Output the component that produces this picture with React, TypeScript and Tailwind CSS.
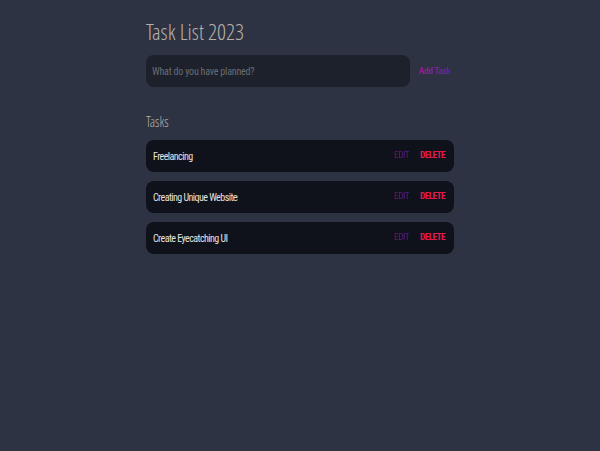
const tasks = ["Freelancing", "Creating Unique Websites", "Create Eyecatching UI"];

const condensed = { fontFamily: '"Roboto Condensed", "Open Sans Condensed Light", sans-serif' };
const heading = { fontFamily: '"Open Sans Condensed Light", "Roboto Condensed", sans-serif' };

export default function App() {
  return (
    <div className="min-h-[451px] bg-[#2d3342] pt-[16px]" style={condensed}>
      <div className="mx-auto w-[308px]">
        <h1 className="text-[22.5px] leading-[31px] text-[#b7b0a8]" style={heading}>
          Task List 2023
        </h1>
        <form className="mt-[8px] flex items-center gap-[9px]" onSubmit={(e) => e.preventDefault()}>
          <input
            type="text"
            placeholder="What do you have planned?"
            className="h-[32px] w-[264px] shrink-0 rounded-[8px] bg-[#1c212c] px-[6px] text-[10px] tracking-[-0.2px] text-gray-300 outline-none placeholder:text-[#6a6d74]"
          />
          <button
            type="submit"
            className="whitespace-nowrap bg-gradient-to-r from-[#a0158f] to-[#5a1fb0] bg-clip-text text-[9.5px] font-bold tracking-[-0.4px] text-transparent"
          >
            Add Task
          </button>
        </form>

        <h2 className="mt-[26px] text-[14px] leading-[18px] text-[#b7b0a8]" style={heading}>
          Tasks
        </h2>
        <div className="mt-[9px] flex flex-col gap-[9px]">
          {tasks.map((task) => (
            <div key={task} className="flex h-[32px] items-center rounded-[8px] bg-[#0f121b] pb-[2px] pl-[7px] pr-[9px]">
              <div className="flex-1">
                <input
                  type="text"
                  readOnly
                  value={task}
                  className="w-[85px] bg-transparent text-[10px] tracking-[-0.55px] text-[#e6e3e0] outline-none"
                />
              </div>
              <button className="bg-gradient-to-r from-[#6e136e] to-[#4a1a8c] bg-clip-text text-[9.5px] tracking-[-0.6px] text-transparent">
                EDIT
              </button>
              <button className="ml-[11px] text-[9.5px] font-bold tracking-[-0.7px] text-[#e3194a]">DELETE</button>
            </div>
          ))}
        </div>
      </div>
    </div>
  );
}
